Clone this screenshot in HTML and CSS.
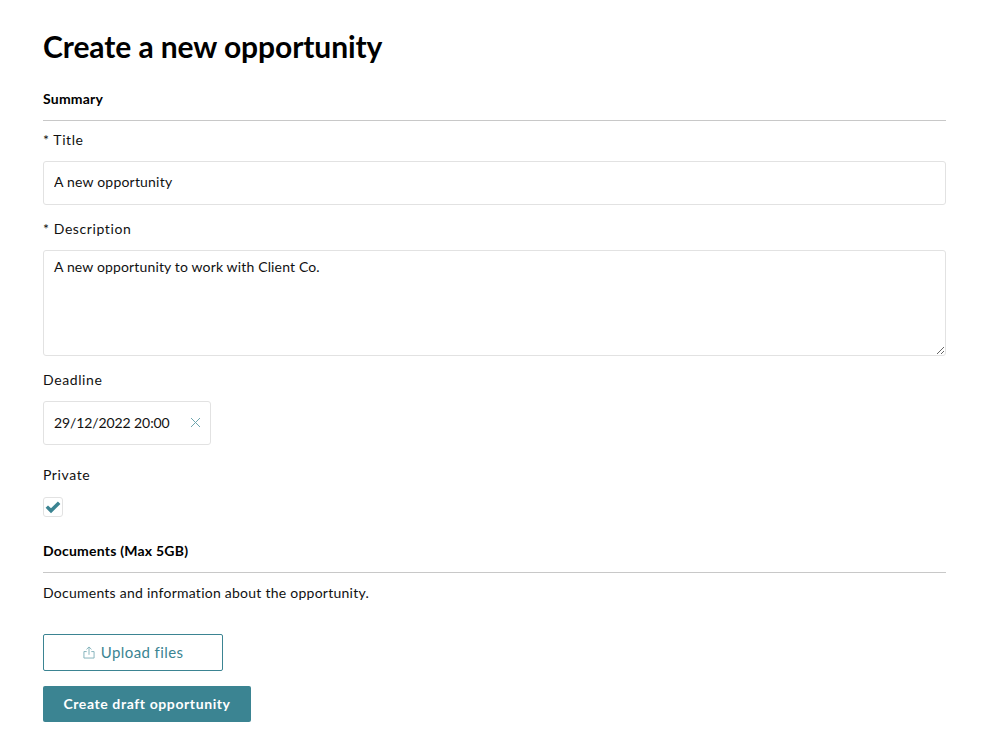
FILE: index.html
```html
<!DOCTYPE html>
<html lang="en">
<head>
    <meta charset="UTF-8">
    <title>Create a new opportunity</title>
    <link rel="stylesheet" href="styles.css">
</head>
<body>
    <div class="container">
        <h1>Create a new opportunity</h1>

        <h2 class="section-title">Summary</h2>

        <div class="form-group title-group">
            <label for="title">* Title</label>
            <input type="text" id="title" value="A new opportunity">
        </div>

        <div class="form-group description-group">
            <label for="description">* Description</label>
            <textarea id="description">A new opportunity to work with Client Co.</textarea>
        </div>

        <div class="form-group deadline-group">
            <label for="deadline">Deadline</label>
            <div class="date-field">
                <input type="text" id="deadline" value="29/12/2022 20:00">
                <svg class="clear-icon" width="11" height="11" viewBox="0 0 11 11">
                    <path d="M1 1 L10 10 M10 1 L1 10"></path>
                </svg>
            </div>
        </div>

        <div class="form-group private-group">
            <label>Private</label>
            <div class="checkbox">
                <svg width="16" height="13" viewBox="0 0 16 13">
                    <path d="M0.6 6.8 L3 4.4 L6 7.3 L12.9 0.6 L15.4 3 L6 12.2 Z"></path>
                </svg>
            </div>
        </div>

        <h2 class="section-title">Documents (Max 5GB)</h2>
        <p class="help-text">Documents and information about the opportunity.</p>

        <button class="btn-outline">
            <svg width="12" height="13" viewBox="0 0 13 14">
                <path d="M6.5 9.5 V1.2 M3.8 3.6 L6.5 1 L9.2 3.6 M4 6 H1 V13 H12 V6 H9"></path>
            </svg>
            Upload files
        </button>
        <button class="btn-primary">Create draft opportunity</button>
    </div>
</body>
</html>
```

FILE: styles.css
```css
* {
    box-sizing: border-box;
}
body {
    font-family: 'Lato', sans-serif;
    margin: 0;
    background: white;
    color: #111;
}
.container {
    width: 903px;
    margin-left: 43px;
    padding-top: 27px;
}
h1 {
    margin: 0 0 22px;
    font-size: 30px;
    line-height: 38px;
    font-weight: 700;
    letter-spacing: -0.08px;
    color: #000;
}
.section-title {
    margin: 0;
    height: 34px;
    font-size: 14px;
    line-height: 23px;
    font-weight: 700;
    letter-spacing: 0.22px;
    color: #000;
    border-bottom: 1px solid #c8c8c8;
}
label {
    display: block;
    font-size: 14px;
    line-height: 20px;
    margin-bottom: 11px;
    letter-spacing: 0.6px;
}
input, textarea {
    display: block;
    width: 100%;
    font-family: inherit;
    font-size: 14px;
    color: #111;
    border: 1px solid #e2e2e2;
    border-radius: 3px;
    padding: 0 10px;
    outline: none;
    letter-spacing: 0.2px;
}
input {
    height: 44px;
    padding-bottom: 3px;
}
textarea {
    height: 106px;
    padding-top: 7px;
    line-height: 18px;
    letter-spacing: 0.15px;
}
.form-group {
    margin-bottom: 14px;
}
.title-group {
    margin-top: 9px;
}
.date-field {
    position: relative;
    width: 168px;
}
.date-field input {
    letter-spacing: -0.1px;
    padding-bottom: 2px;
}
.clear-icon {
    position: absolute;
    top: 16px;
    right: 10px;
}
.clear-icon path {
    fill: none;
    stroke: #6fa6ae;
    stroke-width: 1;
}
.deadline-group {
    margin-bottom: 20px;
}
.private-group {
    margin-bottom: 22px;
}
.private-group label {
    margin-bottom: 12px;
}
.checkbox {
    width: 20px;
    height: 20px;
    border: 1px solid #e2e2e2;
    border-radius: 3px;
    display: flex;
    align-items: center;
    justify-content: center;
}
.checkbox path {
    fill: #3b8492;
}
.help-text {
    margin: 10px 0 31px;
    font-size: 14px;
    line-height: 20px;
    letter-spacing: 0.25px;
}
button {
    display: block;
    font-family: inherit;
    border-radius: 2px;
    cursor: pointer;
}
.btn-outline {
    width: 180px;
    height: 37px;
    margin-bottom: 15px;
    padding-bottom: 3px;
    background: white;
    border: 1px solid #3b8492;
    color: #3b8492;
    font-size: 15px;
    letter-spacing: 0.4px;
}
.btn-outline svg {
    vertical-align: -1px;
    margin-right: 2px;
}
.btn-outline path {
    fill: none;
    stroke: #7fb0b8;
    stroke-width: 1;
}
.btn-primary {
    width: 208px;
    height: 36px;
    padding-bottom: 3px;
    background: #3b8492;
    border: none;
    color: white;
    font-size: 14px;
    font-weight: 700;
    letter-spacing: 0.6px;
}
```
